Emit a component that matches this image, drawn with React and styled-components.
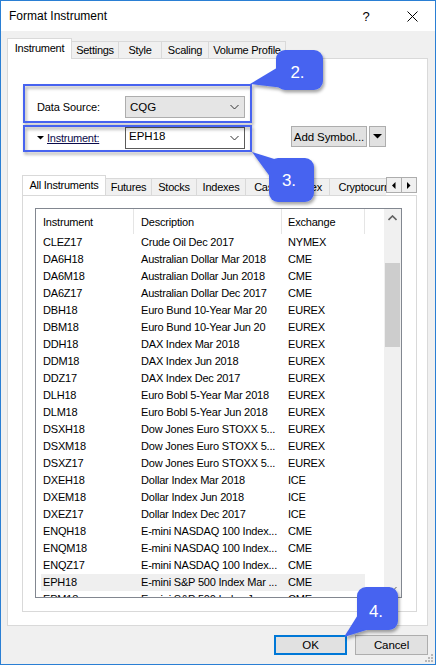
import React from 'react';
import styled, { createGlobalStyle } from 'styled-components';

const GlobalStyle = createGlobalStyle`
  html, body {
    margin: 0;
    padding: 0;
    background: #fff;
  }
  body {
    font-family: "Liberation Sans", Arial, sans-serif;
    font-size: 11px;
    color: #000;
  }
  * {
    box-sizing: border-box;
  }
`;

const Window = styled.div`
  position: relative;
  width: 436px;
  height: 665px;
  border: 1px solid #2a7fd4;
  background: #f0f0f0;
  display: flex;
  flex-direction: column;
  overflow: hidden;
`;

const TitleBar = styled.div`
  flex: 0 0 30px;
  background: #fff;
  display: flex;
  align-items: center;
  padding-left: 8px;
`;

const TitleText = styled.div`
  flex: 1;
  font-size: 12px;
`;

const CaptionButton = styled.div`
  width: 46px;
  height: 30px;
  display: flex;
  align-items: center;
  justify-content: center;
  font-size: 13px;
`;

const Body = styled.div`
  flex: 1;
  min-height: 0;
  display: flex;
  flex-direction: column;
  padding: 7px 7px 0 6px;
`;

const TabStrip = styled.div`
  display: flex;
  align-items: flex-end;
  flex: 0 0 20px;
  position: relative;
  z-index: 1;
`;

const Tab = styled.div`
  flex: 0 0 ${({ $w }) => $w}px;
  height: ${({ $active }) => ($active ? 21 : 17)}px;
  margin-left: ${({ $first }) => ($first ? 0 : -1)}px;
  margin-bottom: ${({ $active }) => ($active ? -1 : 0)}px;
  background: ${({ $active }) => ($active ? '#fff' : '#f0f0f0')};
  border: 1px solid #d9d9d9;
  border-bottom: none;
  display: flex;
  align-items: center;
  justify-content: center;
  padding-bottom: ${({ $active }) => ($active ? 3 : 0)}px;
  font-size: 11px;
  letter-spacing: -0.25px;
  white-space: nowrap;
  overflow: hidden;
  position: relative;
  z-index: ${({ $active }) => ($active ? 2 : 1)};
`;

const Panel = styled.div`
  flex: 0 0 568px;
  height: 568px;
  min-height: 0;
  overflow: hidden;
  background: #fff;
  border: 1px solid #d9d9d9;
  display: flex;
  flex-direction: column;
  padding: 37px 10px 13px 14px;
`;

const FormRow = styled.div`
  display: flex;
  align-items: flex-start;
  flex: 0 0 22px;
  margin-left: 15px;
  margin-top: ${({ $gap }) => $gap || 0}px;
`;

const Label = styled.div`
  flex: 0 0 88px;
  height: 22px;
  display: flex;
  align-items: center;
  letter-spacing: -0.1px;
`;

const LinkLabel = styled.span`
  color: #0a0a4a;
  text-decoration: underline;
  letter-spacing: -0.25px;
  margin-left: 3px;
`;

const Combo = styled.div`
  flex: 0 0 120px;
  height: 22px;
  border: 1px solid ${({ $edit }) => ($edit ? '#5a5a5a' : '#adadad')};
  background: ${({ $edit }) => ($edit ? '#fff' : '#e5e5e5')};
  display: flex;
  align-items: ${({ $edit }) => ($edit ? 'flex-start' : 'center')};
  padding: ${({ $edit }) => ($edit ? '2px 0 0 3px' : '0 0 0 4px')};
  font-size: 11.5px;
`;

const ComboText = styled.span`
  flex: 1;
`;

const ComboArrow = styled.span`
  width: 20px;
  height: 20px;
  display: flex;
  align-items: center;
  justify-content: center;
  align-self: center;
  margin-top: ${({ $edit }) => ($edit ? -2 : 0)}px;
`;

const Button = styled.div`
  flex: 0 0 ${({ $w }) => $w}px;
  height: ${({ $h }) => $h || 20}px;
  background: #e1e1e1;
  border: ${({ $default }) => ($default ? '2px solid #0078d7' : '1px solid #adadad')};
  display: flex;
  align-items: center;
  justify-content: center;
  margin-left: ${({ $ml }) => $ml || 0}px;
  margin-top: ${({ $mt }) => $mt || 0}px;
  font-size: 11.5px;
  letter-spacing: -0.1px;
`;

const InnerStrip = styled.div`
  display: flex;
  flex: 0 0 20px;
  margin-top: 26px;
  position: relative;
  z-index: 1;
`;

const InnerTabs = styled.div`
  flex: 1;
  display: flex;
  align-items: flex-end;
  overflow: hidden;
`;

const ScrollArrows = styled.div`
  display: flex;
  align-self: flex-start;
  margin-top: 2px;
`;

const ArrowBox = styled.div`
  width: 16px;
  height: 16px;
  margin-left: ${({ $first }) => ($first ? 0 : -1)}px;
  border: 1px solid #adadad;
  background: #f0f0f0;
  display: flex;
  align-items: center;
  justify-content: center;
`;

const InnerPanel = styled.div`
  flex: 1;
  display: flex;
  border: 1px solid #d9d9d9;
  background: #fff;
  padding: 12px 14px 13px 12px;
  min-height: 0;
  overflow: hidden;
`;

const ListBox = styled.div`
  flex: 1;
  display: flex;
  border: 1px solid #828790;
  overflow: hidden;
  min-height: 0;
`;

const ListContent = styled.div`
  flex: 1;
  display: flex;
  flex-direction: column;
  overflow: hidden;
`;

const Header = styled.div`
  flex: 0 0 25px;
  display: flex;
`;

const HeaderCell = styled.div`
  flex: 0 0 ${({ $w }) => $w}px;
  border-right: 1px solid #e5e5e5;
  padding-left: ${({ $pad }) => $pad}px;
  display: flex;
  align-items: center;
  font-size: 11px;
  letter-spacing: -0.2px;
`;

const Rows = styled.div`
  padding-left: 5px;
`;

const Row = styled.div`
  display: grid;
  grid-template-columns: 98px 147px 79px;
  width: 324px;
  height: 17px;
  line-height: 17px;
  background: ${({ $selected }) => ($selected ? '#efefef' : 'transparent')};
`;

const Cell = styled.div`
  padding-left: 2px;
  white-space: nowrap;
  overflow: hidden;
  font-size: 11px;
  letter-spacing: -0.2px;
`;

const ScrollBar = styled.div`
  flex: 0 0 17px;
  background: #f0f0f0;
  display: flex;
  flex-direction: column;
`;

const ScrollButton = styled.div`
  flex: 0 0 17px;
  display: flex;
  align-items: center;
  justify-content: center;
`;

const Track = styled.div`
  flex: 1;
  padding: 37px 1px 0 1px;
`;

const Thumb = styled.div`
  height: 84px;
  background: #cdcdcd;
`;

const Footer = styled.div`
  display: flex;
  justify-content: flex-end;
  gap: 8px;
  padding-top: 9px;
`;

const Grip = styled.svg`
  position: absolute;
  right: 1px;
  bottom: 1px;
`;

const Overlay = styled.svg`
  position: absolute;
  left: -1px;
  top: -1px;
  pointer-events: none;
  z-index: 10;
`;

const outerTabs = [
  { label: 'Instrument', w: 65, active: true },
  { label: 'Settings', w: 48 },
  { label: 'Style', w: 44 },
  { label: 'Scaling', w: 48 },
  { label: 'Volume Profile', w: 78 },
];

const innerTabs = [
  { label: 'All Instruments', w: 84, active: true },
  { label: 'Futures', w: 47 },
  { label: 'Stocks', w: 46 },
  { label: 'Indexes', w: 50 },
  { label: 'Cash', w: 43 },
  { label: 'Forex', w: 43 },
  { label: 'Cryptocurrency', w: 90 },
];

const rows = [
  ['CLEZ17', 'Crude Oil Dec 2017', 'NYMEX'],
  ['DA6H18', 'Australian Dollar Mar 2018', 'CME'],
  ['DA6M18', 'Australian Dollar Jun 2018', 'CME'],
  ['DA6Z17', 'Australian Dollar Dec 2017', 'CME'],
  ['DBH18', 'Euro Bund 10-Year Mar 20', 'EUREX'],
  ['DBM18', 'Euro Bund 10-Year Jun 20', 'EUREX'],
  ['DDH18', 'DAX Index Mar 2018', 'EUREX'],
  ['DDM18', 'DAX Index Jun 2018', 'EUREX'],
  ['DDZ17', 'DAX Index Dec 2017', 'EUREX'],
  ['DLH18', 'Euro Bobl 5-Year Mar 2018', 'EUREX'],
  ['DLM18', 'Euro Bobl 5-Year Jun 2018', 'EUREX'],
  ['DSXH18', 'Dow Jones Euro STOXX 5...', 'EUREX'],
  ['DSXM18', 'Dow Jones Euro STOXX 5...', 'EUREX'],
  ['DSXZ17', 'Dow Jones Euro STOXX 5...', 'EUREX'],
  ['DXEH18', 'Dollar Index Mar 2018', 'ICE'],
  ['DXEM18', 'Dollar Index Jun 2018', 'ICE'],
  ['DXEZ17', 'Dollar Index Dec 2017', 'ICE'],
  ['ENQH18', 'E-mini NASDAQ 100 Index...', 'CME'],
  ['ENQM18', 'E-mini NASDAQ 100 Index...', 'CME'],
  ['ENQZ17', 'E-mini NASDAQ 100 Index...', 'CME'],
  ['EPH18', 'E-mini S&P 500 Index Mar ...', 'CME', true],
  ['EPM18', 'E-mini S&P 500 Index Jun ...', 'CME'],
];

const Chevron = ({ up, color = '#606060' }) => (
  <svg width="9" height="6" viewBox="0 0 9 6">
    <polyline
      points={up ? '0.5,5 4.5,1 8.5,5' : '0.5,1 4.5,5 8.5,1'}
      fill="none"
      stroke={color}
      strokeWidth={up ? 1.6 : 1}
    />
  </svg>
);

const Triangle = ({ dir = 'down', size = 4 }) => {
  const s = size;
  const pts = {
    down: `0,0 ${s * 2},0 ${s},${s}`,
    left: `${s},0 ${s},${s * 2} 0,${s}`,
    right: `0,0 0,${s * 2} ${s},${s}`,
  }[dir];
  const w = dir === 'down' ? s * 2 : s;
  const h = dir === 'down' ? s : s * 2;
  return (
    <svg width={w} height={h} viewBox={`0 0 ${w} ${h}`}>
      <polygon points={pts} fill="#000" />
    </svg>
  );
};

const Bubble = ({ x, y, w, h, tail, label, tx, ty }) => (
  <g>
    <g filter="url(#shadow)">
      <polygon points={tail} fill="#4664f0" />
      <rect x={x} y={y} width={w} height={h} rx="9" fill="#4664f0" />
    </g>
    <text
      x={tx}
      y={ty}
      fill="#fff"
      fontSize="17"
      fontFamily="Liberation Sans, Arial, sans-serif"
      textAnchor="middle"
    >
      {label}
    </text>
  </g>
);

const App = () => {
  return (
    <>
      <GlobalStyle />
      <Window>
        <TitleBar>
          <TitleText>Format Instrument</TitleText>
          <CaptionButton>?</CaptionButton>
          <CaptionButton>
            <svg width="11" height="11" viewBox="0 0 11 11">
              <path d="M0.5 0.5 L10.5 10.5 M10.5 0.5 L0.5 10.5" stroke="#000" strokeWidth="1" />
            </svg>
          </CaptionButton>
        </TitleBar>

        <Body>
          <TabStrip>
            {outerTabs.map((t, i) => (
              <Tab key={t.label} $w={t.w} $active={t.active} $first={i === 0}>
                {t.label}
              </Tab>
            ))}
          </TabStrip>

          <Panel>
            <FormRow>
              <Label>Data Source:</Label>
              <Combo>
                <ComboText>CQG</ComboText>
                <ComboArrow>
                  <Chevron color="#333" />
                </ComboArrow>
              </Combo>
            </FormRow>
            <FormRow $gap={9}>
              <Label>
                <Triangle dir="down" size={3.5} />
                <LinkLabel>Instrument:</LinkLabel>
              </Label>
              <Combo $edit>
                <ComboText>EPH18</ComboText>
                <ComboArrow $edit>
                  <Chevron color="#333" />
                </ComboArrow>
              </Combo>
              <Button $w={76} $h={21} $ml={46} $mt={-1}>
                Add Symbol...
              </Button>
              <Button $w={17} $h={21} $ml={2} $mt={-1}>
                <Triangle dir="down" size={4.5} />
              </Button>
            </FormRow>

            <InnerStrip>
              <InnerTabs>
                {innerTabs.map((t, i) => (
                  <Tab key={t.label} $w={t.w} $active={t.active} $first={i === 0}>
                    {t.label}
                  </Tab>
                ))}
              </InnerTabs>
              <ScrollArrows>
                <ArrowBox $first>
                  <Triangle dir="left" size={3.5} />
                </ArrowBox>
                <ArrowBox>
                  <Triangle dir="right" size={3.5} />
                </ArrowBox>
              </ScrollArrows>
            </InnerStrip>

            <InnerPanel>
              <ListBox>
                <ListContent>
                  <Header>
                    <HeaderCell $w={98} $pad={7}>Instrument</HeaderCell>
                    <HeaderCell $w={148} $pad={7}>Description</HeaderCell>
                    <HeaderCell $w={83} $pad={6}>Exchange</HeaderCell>
                  </Header>
                  <Rows>
                    {rows.map(([sym, desc, ex, sel]) => (
                      <Row key={sym} $selected={sel}>
                        <Cell>{sym}</Cell>
                        <Cell>{desc}</Cell>
                        <Cell>{ex}</Cell>
                      </Row>
                    ))}
                  </Rows>
                </ListContent>
                <ScrollBar>
                  <ScrollButton>
                    <Chevron up />
                  </ScrollButton>
                  <Track>
                    <Thumb />
                  </Track>
                  <ScrollButton>
                    <Chevron />
                  </ScrollButton>
                </ScrollBar>
              </ListBox>
            </InnerPanel>
          </Panel>

          <Footer>
            <Button $w={73} $default>OK</Button>
            <Button $w={73}>Cancel</Button>
          </Footer>
        </Body>

        <Grip width="10" height="10" viewBox="0 0 10 10">
          {[
            [8, 2], [8, 5], [8, 8], [5, 5], [5, 8], [2, 8],
          ].map(([cx, cy]) => (
            <rect key={`${cx}-${cy}`} x={cx - 1} y={cy - 1} width="2" height="2" fill="#b8b8b8" />
          ))}
        </Grip>

        <Overlay width="436" height="665" viewBox="0 0 436 665">
          <defs>
            <filter id="shadow" x="-30%" y="-30%" width="170%" height="170%">
              <feDropShadow dx="1.5" dy="2.5" stdDeviation="1.6" floodColor="#000" floodOpacity="0.35" />
            </filter>
          </defs>
          <g filter="url(#shadow)">
            <rect x="24" y="85" width="227" height="37" fill="none" stroke="#4664f0" strokeWidth="2" />
            <rect x="24" y="126" width="227" height="25" fill="none" stroke="#4664f0" strokeWidth="2" />
          </g>
          <Bubble
            x={276} y={50} w={47} h={40}
            tail="250,84 280,66 284,88"
            label="2." tx={297.5} ty={78}
          />
          <Bubble
            x={269} y={158} w={45} h={44}
            tail="252,152 284,162 271,178"
            label="3." tx={289} ty={186}
          />
          <Bubble
            x={357} y={587} w={41} h={43}
            tail="344,637 361,610 373,628"
            label="4." tx={376} ty={617}
          />
        </Overlay>
      </Window>
    </>
  );
};

export default App;
